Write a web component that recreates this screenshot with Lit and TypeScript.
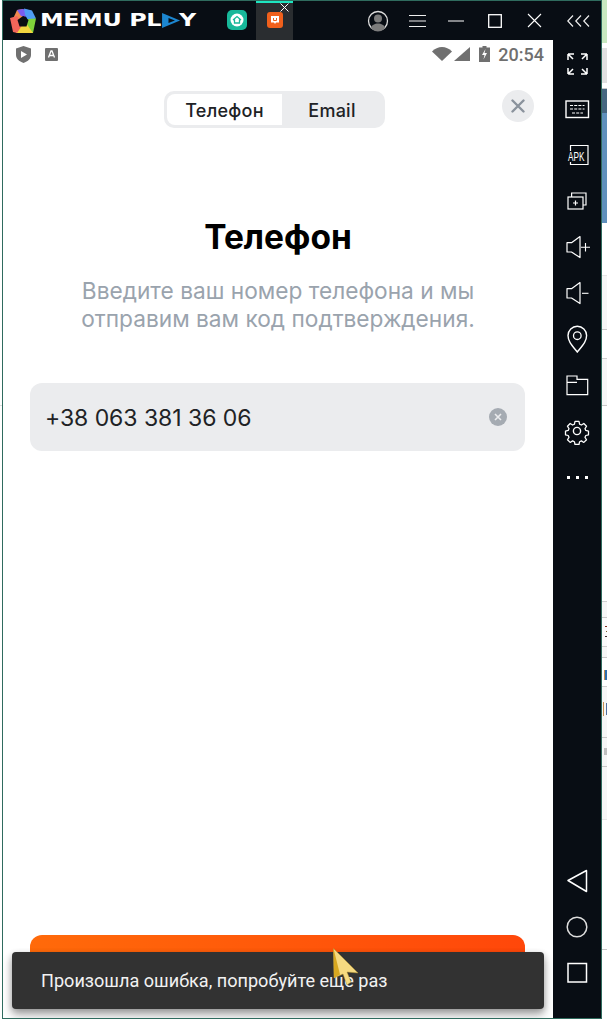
import { LitElement, html, css, svg } from "lit";
import { customElement } from "lit/decorators.js";

const SLIVER: [number, number, string, number?][] = [
  [0, 43, "#c8e8c0"], [48, 83, "#e0e0e0"], [88, 89, "#c8c8c8"], [89, 113, "#466680"], [113, 223, "#6090bc"],
  [275, 329, "#f6f6f6"], [275, 276, "#e6e6e6"], [329, 330, "#c8c8c8"], [358, 359, "#d0d0d0"], [359, 405, "#f6f6f6"], [405, 406, "#c8c8c8"],
  [601, 602, "#d0d0d0"], [602, 617, "#f6f6f6"], [617, 618, "#c8c8c8"], [618, 646, "#fafafa"], [626, 627, "#803020", 3], [631, 632, "#806030", 4], [636, 637, "#403030", 3],
  [646, 647, "#d0d0d0"], [647, 657, "#f6f6f6"], [657, 658, "#c8c8c8"], [670, 680, "#c89050", 2], [670, 680, "#2f6fb0", 3], [686, 687, "#d0d0d0"], [687, 737, "#f6f6f6"], [702, 716, "#c89050", 1], [702, 716, "#f6f6f6", 2], [703, 715, "#5070a0", 4],
  [737, 738, "#c8c8c8"], [738, 766, "#f6f6f6"], [748, 755, "#c0c0c0", 2], [766, 767, "#c8c8c8"], [767, 819, "#f6f6f6"], [819, 820, "#e6e6e6"], [949, 950, "#c8c8c8"],
];

const ic = (body: unknown) => html`<svg class="ico" viewBox="0 0 28 28" fill="none" stroke="#fff" stroke-width="1.400">${body}</svg>`;

const TOOLS = [
  ic(svg`<path d="M5 5h6M5 5v6M5 5l5 5M24 5h-6M24 5v6M24 5l-5 5M5 25h6M5 25v-6M5 25l5-5M24 25h-6M24 25v-6M24 25l-5-5" stroke-width="1.500"/>`),
  ic(svg`<rect x="3" y="6" width="22.500" height="16.500"/><path d="M7 10.500h14.500M7 14h14.500M9 18h11" stroke-dasharray="3 1.200" stroke-width="1.100"/>`),
  html`<svg class="ico" viewBox="0 0 28 28" fill="none" stroke="#fff" stroke-width="1.200"><path d="M7.500 10V4.500h17.500v19H7.500V21"/><rect x="3" y="10" width="20" height="10" fill="#080d14" stroke="none"/><text class="apk" transform="translate(5 19.500) scale(.63 1)">APK</text></svg>`,
  ic(svg`<path d="M8.600 10V6h14.400v12h-3" stroke-width="1.200"/><rect x="5" y="10" width="15" height="12" stroke-width="1.200"/><path d="M12.500 13.500v5M10 16h5" stroke-width="1.200"/>`),
  ic(svg`<path d="M4 9.700h4.500L17 3.600v21l-8.500-5.600H4z" stroke-linejoin="round" stroke-width="1.200"/><path d="M18 14.300h9M22.500 10v8.500" stroke-width="1.100"/>`),
  ic(svg`<path d="M4 9.700h4.500L17 3.600v21l-8.500-5.600H4z" stroke-linejoin="round" stroke-width="1.200"/><path d="M19 14.300h6.500" stroke-width="1.100"/>`),
  ic(svg`<path d="M14.300 27C9 20.500 5 16.500 5 10.500a9.300 9.300 0 0 1 18.600 0c0 6-4 10-9.300 16.500z" stroke-width="1.400"/><circle cx="14.300" cy="10.700" r="3.800" stroke-width="1.300"/>`),
  ic(svg`<path d="M4 23.700V5h10v3.400h10.700v15.300zM4 11.300h10" stroke-width="1.200"/>`),
  ic(svg`<circle cx="14" cy="14" r="3.600"/><path stroke-linejoin="round" d="M11.800 3.500h4.400l.7 3.100 2 .9 2.700-1.700 3 3-1.700 2.700.9 2 3 .7v4.200l-3 .7-.9 2 1.700 2.700-3 3-2.700-1.700-2 .9-.7 3.100h-4.400l-.7-3.100-2-.9-2.700 1.700-3-3 1.700-2.700-.9-2-3-.7v-4.200l3-.7.9-2-1.700-2.700 3-3 2.700 1.700 2-.9z" transform="translate(1.400 1.300) scale(.9)"/>`),
  html`<svg class="ico" viewBox="0 0 28 28" fill="#fff"><rect x="4" y="13" width="3" height="3"/><rect x="13" y="13" width="3" height="3"/><rect x="22" y="13" width="3" height="3"/></svg>`,
];

const NAV = [
  ic(svg`<path d="M5 13.500 23.500 3.500v21z" stroke-linejoin="round" stroke-width="1.500"/>`),
  html`<svg class="ico" viewBox="0 0 28 28" fill="none" stroke="#ddd" stroke-width="1.500"><circle cx="14" cy="14" r="9.800"/></svg>`,
  ic(svg`<rect x="5" y="4.500" width="18.500" height="18.500" stroke-width="1.500"/>`),
];

@customElement("app-root")
export class AppRoot extends LitElement {
  static styles = css`
    :host { display: block; width: 607px; height: 1020px; background: #fff; overflow: hidden; position: relative; font-family: Inter, "Noto Sans", sans-serif; }
    .window { display: flex; height: 1020px; }
    .edge { width: 2px; flex: none; position: relative; }
    .edge i { display: block; height: 1px; background: #ddd; margin-top: 405px; }
    .frame { width: 600px; height: 1019px; flex: none; box-sizing: border-box; border: 1px solid #2f6b5e; display: flex; flex-direction: column; position: relative; }
    .sliver { width: 5px; flex: none; display: block; }

    .top { height: 39px; flex: none; background: #080d14; display: flex; align-items: stretch; position: relative; }
    .logo { width: 28px; height: 26px; margin: 7px 0 0 6px; flex: none; }
    .brand { margin-left: 3px; width: 157px; height: 39px; flex: none; }
    .brand div { display: flex; align-items: center; height: 39px; color: #fff; font: 800 18.500px/1 "DejaVu Sans", sans-serif; letter-spacing: -.3px; white-space: nowrap; transform: scaleX(1.285); transform-origin: 0 50%; width: 122px; }
    .brand svg { width: 15px; height: 15px; margin: 0 -1px 0 0; flex: none; }
    .app1 { width: 20px; height: 20px; flex: none; margin: 9px 0 0 30px; border-radius: 5px; background: #17b89a; display: flex; align-items: center; justify-content: center; }
    .tab { width: 37px; flex: none; margin-left: 9px; background: #2a2d30; position: relative; display: flex; justify-content: center; padding-top: 11px; box-sizing: border-box; }
    .tab::before { content: ""; position: absolute; left: 0; right: 0; top: 0; height: 2px; background: #1ee5c0; }
    .app2 { width: 16px; height: 16px; border-radius: 3px; background: #f0601c; display: flex; align-items: center; justify-content: center; }
    .tab .x { position: absolute; top: 2px; right: 4px; width: 9px; height: 9px; }
    .ctrls { margin-left: auto; display: flex; align-items: center; height: 39px; }
    .ctrls svg { display: block; flex: none; }

    .body { flex: 1; display: flex; min-height: 0; }
    .screen { width: 550px; flex: none; background: #fff; position: relative; overflow: hidden; display: flex; flex-direction: column; }
    .side { flex: 1; background: #080d14; display: flex; flex-direction: column; align-items: center; padding: 0 0 22px; }
    .tool { height: 46px; display: flex; align-items: center; justify-content: center; flex: none; }
    .ico { width: 28px; height: 28px; display: block; }
    .apk { font: 400 13px "Liberation Sans", sans-serif; fill: #fff; stroke: none; }
    .spacer { flex: 1; }

    .status { height: 30px; flex: none; display: flex; align-items: center; padding: 0 9px 2px 13px; box-sizing: border-box; color: #6f6f6f; }
    .status .time { font: 500 18px Roboto, sans-serif; margin-left: 8px; }
    .status svg { display: block; flex: none; }
    .head { display: flex; align-items: flex-start; padding-top: 21px; height: 37px; flex: none; }
    .seg { margin-left: 161px; width: 221px; height: 37px; box-sizing: border-box; padding: 3px; border-radius: 10px; background: #ebecee; display: flex; font-size: 18px; font-weight: 500; color: #202225; letter-spacing: .25px; }
    .seg div { display: flex; align-items: center; justify-content: center; padding-top: 1px; box-sizing: border-box; }
    .seg .on { width: 115px; background: #fff; border-radius: 8px 0 0 8px; }
    .seg .off { flex: 1; }
    .close { margin-left: auto; margin-right: 19px; margin-top: -1px; width: 32px; height: 32px; border-radius: 50%; background: #ebecee; display: flex; align-items: center; justify-content: center; }
    h1 { margin: 89px 0 0; height: 40px; line-height: 40px; text-align: center; font-size: 33.500px; font-weight: 700; color: #000; }
    .sub { margin: 20px 0 0; font-size: 22.700px; line-height: 28px; text-align: center; color: #9aa3ad; font-weight: 400; }
    .field { margin: 50px 28px 0 27px; height: 68px; border-radius: 12px; background: #ebecee; display: flex; align-items: center; justify-content: space-between; padding: 0 18px 0 15px; font-size: 23px; letter-spacing: -.05px; color: #202225; }
    .field span:first-child { padding-top: 1px; }
    .clear { width: 18px; height: 18px; border-radius: 50%; background: #a5abb2; display: flex; align-items: center; justify-content: center; }
    .btn { margin: auto 28px 15px 27px; height: 68px; border-radius: 12px; background: linear-gradient(90deg, #ff6a0a, #ff470a); flex: none; }
    .toast { position: absolute; left: 9px; right: 9px; bottom: 9px; height: 57px; border-radius: 4px; background: #323232; color: #f2f2f2; font: 400 18.100px/58px Roboto, sans-serif; padding-left: 29px; box-shadow: 0 6px 10px rgba(0,0,0,.3), 0 2px 6px rgba(0,0,0,.2); }
    .cursor { position: absolute; left: 330px; top: 947px; width: 26px; height: 38px; }
  `;

  render() {
    return html`<div class="window">
      <div class="edge"><i></i></div>
      <div class="frame">
        <div class="top">
          <svg class="logo" viewBox="0 0 28 26">
            <path d="M14 1 8 2 4 11 14 12z" fill="#f08a50"/><path d="M8 2 14 1l8 1.500L19 9 12 8z" fill="#7a5cf0"/>
            <path d="M15 .5l8 2 4 8-8 2-3-6z" fill="#4f9cf5"/><path d="M27 10.500 24 25l-7-1-2-8 4-5z" fill="#7ed23a"/>
            <path d="M24 25H7l1-7 9-3z" fill="#f2d640"/><path d="M1 10l7-2 6 8-6 9-4-1z" fill="#f2665a"/>
            <path d="M14 8l5.500 4-2 6.500h-7L8.500 12z" fill="#0a0d12"/>
          </svg>
          <div class="brand"><div>MEMU PL<svg viewBox="0 0 15 15"><path d="M1 0 15 7.500 1 15z" fill="#1c86d0"/><path d="M6 5 11 7.500 6 10z" fill="#0a0d12"/></svg>Y</div></div>
          <div class="app1"><svg width="14" height="14" viewBox="0 0 14 14"><circle cx="7" cy="7" r="6.500" fill="#fff"/><path d="M3 7l4-3.500L11 7M4.500 6.500V10h5V6.500" fill="none" stroke="#17b89a" stroke-width="1.300"/></svg></div>
          <div class="tab">
            <div class="app2"><svg width="10" height="10" viewBox="0 0 10 10"><path d="M1 1h8v6.500H6L5 9 4 7.500H1z" fill="#fff"/><path d="M3.500 3v2.500h3V3" fill="none" stroke="#f0601c"/></svg></div>
            <svg class="x" viewBox="0 0 9 9" stroke="#fff"><path d="M.5.500l8 8M8.500.500l-8 8"/></svg>
          </div>
          <div class="ctrls">
            <svg style="margin-right:20px" width="22" height="22" viewBox="0 0 22 22"><circle cx="11" cy="11" r="9.500" fill="#080d14" stroke="#ddd" stroke-width="1.300"/><circle cx="11" cy="8.500" r="4" fill="#7c7c7c"/><path d="M4 18c1-6 13-6 14 0a9 9 0 0 1-14 0z" fill="#7c7c7c"/></svg>
            <svg style="margin-right:22px" width="17" height="14" viewBox="0 0 17 14" stroke="#eee"><path d="M0 1.500h17M0 7h17M0 12.500h17"/></svg>
            <svg style="margin-right:24px" width="16" height="2" viewBox="0 0 16 2" stroke="#fff"><path d="M0 1h16"/></svg>
            <svg style="margin-right:25px" width="14" height="14" viewBox="0 0 14 14" fill="none" stroke="#fff" stroke-width="1.300"><rect x=".7" y=".7" width="12.600" height="12.600"/></svg>
            <svg style="margin-right:25px" width="15" height="15" viewBox="0 0 15 15" stroke="#fff" stroke-width="1.100"><path d="M1 1l13 13M14 1 1 14"/></svg>
            <svg style="margin-right:11px" width="23" height="12" viewBox="0 0 23 12" fill="none" stroke="#eee" stroke-width="1.200"><path d="M6 .5.800 6 6 11.500M14 .5 8.800 6l5.200 5.500M22 .5 16.800 6l5.200 5.500"/></svg>
          </div>
        </div>
        <div class="body">
          <div class="screen">
            <div class="status">
              <svg width="15" height="17" viewBox="0 0 15 17" style="margin-right:14px"><path d="M7.500 0 15 2.500V9c0 3.500-3 6.500-7.500 8C3 15.500 0 12.500 0 9V2.500z" fill="#707070"/><path d="M5 5l6 3.500L5 12z" fill="#fff"/></svg>
              <svg width="13" height="13" viewBox="0 0 13 13"><rect width="13" height="13" rx="1" fill="#707070"/><path d="M3.500 9.500 6 3h1l2.500 6.500M4.500 7.500h4" fill="none" stroke="#fff" stroke-width="1.300"/></svg>
              <svg width="20" height="14" viewBox="0 0 20 14" style="margin-left:auto"><path d="M0 4.500C5.500-1.500 14.500-1.500 20 4.500L10 14z" fill="#707070"/></svg>
              <svg width="16" height="14" viewBox="0 0 16 14" style="margin:0 9px 0 2px"><path d="M16 0v14H0z" fill="#707070"/></svg>
              <svg width="11" height="16" viewBox="0 0 11 16"><path d="M3.500 0h4v1.500H11V16H0V1.500h3.500z" fill="#707070"/><path d="M6.500 3 3 9h2.500L4.500 13.500 8 7H5.500z" fill="#fff"/></svg>
              <span class="time">20:54</span>
            </div>
            <div class="head">
              <div class="seg"><div class="on">Телефон</div><div class="off">Email</div></div>
              <div class="close"><svg width="14" height="14" viewBox="0 0 14 14" stroke="#8a929c" stroke-width="2.400" stroke-linecap="round"><path d="M1.500 1.500l11 11M12.500 1.500l-11 11"/></svg></div>
            </div>
            <h1>Телефон</h1>
            <p class="sub">Введите ваш номер телефона и мы<br />отправим вам код подтверждения.</p>
            <div class="field"><span>+38 063 381 36 06</span><span class="clear"><svg width="8" height="8" viewBox="0 0 8 8" stroke="#ebecee" stroke-width="1.600"><path d="M1 1l6 6M7 1 1 7"/></svg></span></div>
            <div class="btn"></div>
            <div class="toast">Произошла ошибка, попробуйте еще раз</div>
          </div>
          <div class="side">
            ${TOOLS.map((t) => html`<div class="tool">${t}</div>`)}
            <div class="spacer"></div>
            ${NAV.map((t) => html`<div class="tool">${t}</div>`)}
          </div>
        </div>
        <svg class="cursor" viewBox="0 0 26 38"><path d="M.5.5 25 25l-11-1 4 10-4 3-4-11-9 4z" fill="#f6da80" stroke="#b09030" stroke-width=".5"/><path d="M.5.5 1 30l6-3.500z" fill="#d8a820"/></svg>
      </div>
      <svg class="sliver" width="5" height="1020" viewBox="0 0 5 1020" shape-rendering="crispEdges">
        ${SLIVER.map(([a, b, c, x = 0]) => svg`<rect x=${x} y=${a} width=${5 - x} height=${b - a} fill=${c}/>`)}
      </svg>
    </div>`;
  }
}
